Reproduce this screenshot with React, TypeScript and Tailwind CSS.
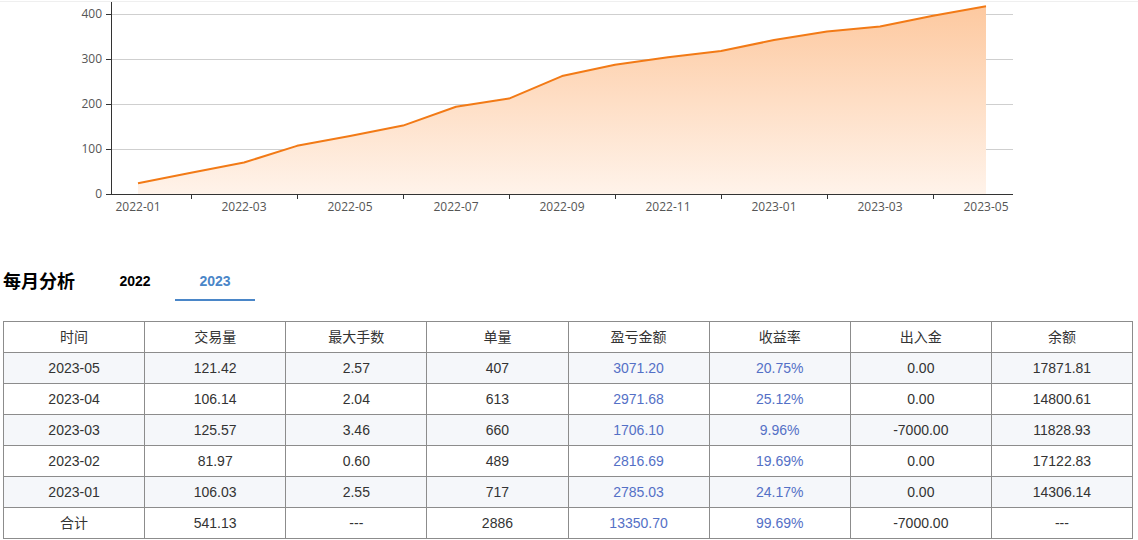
import React, { useState } from "react";

const values = [24, 47, 70, 107, 129, 152, 194, 212, 262, 287, 304, 318, 342, 361, 372, 396, 417];
const xLabels = ["2022-01", "2022-03", "2022-05", "2022-07", "2022-09", "2022-11", "2023-01", "2023-03", "2023-05"];

const rows = [
  ["2023-05", "121.42", "2.57", "407", "3071.20", "20.75%", "0.00", "17871.81"],
  ["2023-04", "106.14", "2.04", "613", "2971.68", "25.12%", "0.00", "14800.61"],
  ["2023-03", "125.57", "3.46", "660", "1706.10", "9.96%", "-7000.00", "11828.93"],
  ["2023-02", "81.97", "0.60", "489", "2816.69", "19.69%", "0.00", "17122.83"],
  ["2023-01", "106.03", "2.55", "717", "2785.03", "24.17%", "0.00", "14306.14"],
  ["合计", "541.13", "---", "2886", "13350.70", "99.69%", "-7000.00", "---"],
];

const headers = ["时间", "交易量", "最大手数", "单量", "盈亏金额", "收益率", "出入金", "余额"];

function Chart() {
  // y: 0 at 194, 100 per 45px; x: first point at 138, 53px per month
  const px = (i: number) => 138 + i * 53;
  const py = (v: number) => 194 - v * 0.45;
  const line = values.map((v, i) => `${i === 0 ? "M" : "L"}${px(i)},${py(v)}`).join(" ");
  const area = `${line} L${px(values.length - 1)},194 L${px(0)},194 Z`;

  return (
    <svg width="1138" height="222" className="block" style={{ fontFamily: '"Open Sans", "Liberation Sans", sans-serif' }}>
      <defs>
        <linearGradient id="fill" x1="0" y1="7" x2="0" y2="194" gradientUnits="userSpaceOnUse">
          <stop offset="0" stopColor="#fdc9a0" />
          <stop offset="1" stopColor="#fff3ea" />
        </linearGradient>
      </defs>
      <line x1="0" y1="1.5" x2="1138" y2="1.5" stroke="#efefef" />
      {[14, 59, 104, 149].map((y) => (
        <line key={y} x1="111" y1={y + 0.5} x2="1013" y2={y + 0.5} stroke="#cfcfcf" />
      ))}
      <path d={area} fill="url(#fill)" />
      <path d={line} fill="none" stroke="#f27a16" strokeWidth="2" strokeLinejoin="round" />
      <line x1="111.5" y1="2" x2="111.5" y2="194" stroke="#333" />
      <line x1="111" y1="194.5" x2="1013" y2="194.5" stroke="#333" />
      {[0, 100, 200, 300, 400].map((v) => (
        <g key={v}>
          <line x1="106" y1={py(v) + 0.5} x2="111" y2={py(v) + 0.5} stroke="#333" />
          <text x="102" y={py(v) + 4} textAnchor="end" fontSize="12" fill="#555">
            {v}
          </text>
        </g>
      ))}
      {[0, 1, 2, 3, 4, 5, 6, 7].map((k) => (
        <line key={k} x1={191.5 + k * 106} y1="194" x2={191.5 + k * 106} y2="199" stroke="#333" />
      ))}
      {xLabels.map((l, k) => (
        <text key={l} x={138 + k * 106} y="211" textAnchor="middle" fontSize="12" fill="#555">
          {l}
        </text>
      ))}
    </svg>
  );
}

export default function App() {
  const [year, setYear] = useState("2023");

  return (
    <div
      className="w-[1138px] h-[540px] bg-white overflow-hidden text-[#333]"
      style={{ fontFamily: '"Liberation Sans", "Noto Sans CJK SC", sans-serif' }}
    >
      <Chart />

      {/* 标题 + 年份标签 */}
      <div className="mt-[42px] flex items-stretch h-[37px]">
        <h2 className="w-[95px] pl-[3px] flex items-center text-[18px] font-bold text-black">每月分析</h2>
        {["2022", "2023"].map((y) => (
          <button
            key={y}
            onClick={() => setYear(y)}
            className={
              "w-[80px] flex items-center justify-center text-[14px] font-bold border-b-2 " +
              (year === y ? "text-[#4a86c8] border-[#4a86c8]" : "text-black border-transparent")
            }
          >
            {y}
          </button>
        ))}
      </div>

      {/* 月度表格 */}
      <div className="mt-[20px] px-[3px]">
        <table className="w-[1130px] table-fixed border-collapse text-[14px]">
          <thead>
            <tr className="h-[31px]">
              {headers.map((h) => (
                <th key={h} className="border border-[#8c8c8c] font-normal text-[#333]">
                  {h}
                </th>
              ))}
            </tr>
          </thead>
          <tbody>
            {rows.map((r, i) => (
              <tr key={r[0]} className={"h-[31px] " + (i % 2 === 0 && i < 5 ? "bg-[#f5f7fa]" : "bg-white")}>
                {r.map((c, j) => (
                  <td
                    key={j}
                    className={
                      "border border-[#8c8c8c] text-center " + (j === 4 || j === 5 ? "text-[#5470c6]" : "text-[#333]")
                    }
                  >
                    {c}
                  </td>
                ))}
              </tr>
            ))}
          </tbody>
        </table>
      </div>
    </div>
  );
}
